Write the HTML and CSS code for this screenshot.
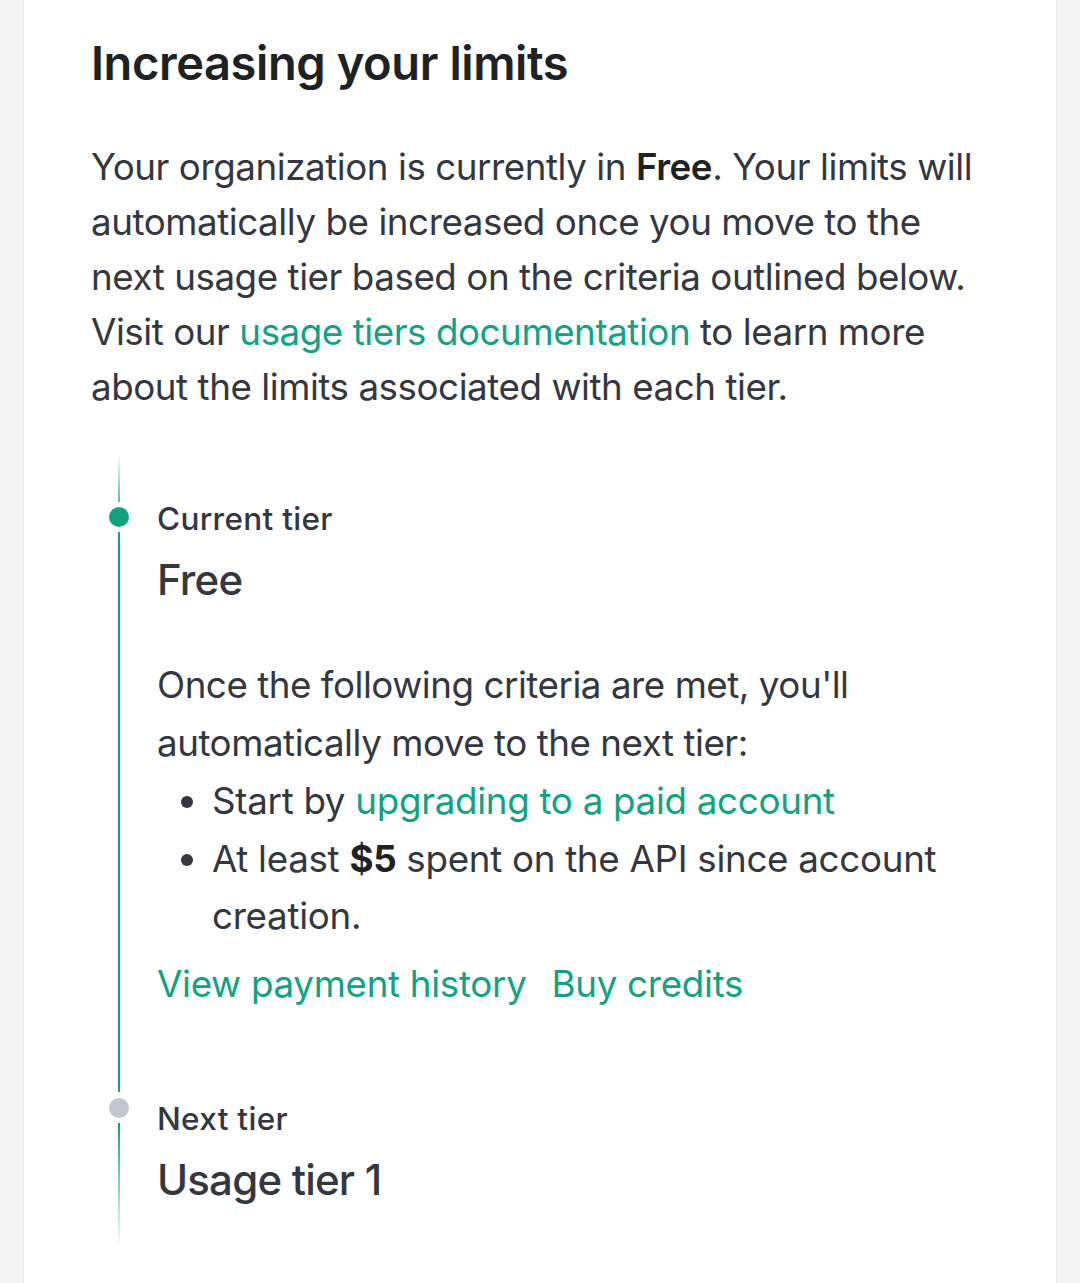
FILE: index.html
```html
<!DOCTYPE html>
<html lang="en">
<head>
<meta charset="utf-8">
<title>Increasing your limits</title>
<link rel="stylesheet" href="styles.css">
</head>
<body>
<main class="card">
  <h1 class="title">Increasing your limits</h1>
  <p class="intro">Your organization is currently in <strong>Free</strong>. Your limits will automatically be increased once you move to the next usage tier based on the criteria outlined below. Visit our <a class="link" href="#">usage tiers documentation</a> to learn more about the limits associated with each tier.</p>

  <section class="timeline">
    <div class="tl-item">
      <div class="rail">
        <span class="seg seg-fade-in"></span>
        <span class="dot dot-active"></span>
        <span class="seg seg-fill"></span>
      </div>
      <div class="tl-body tl-body-first">
        <div class="tier-label">Current tier</div>
        <div class="tier-name">Free</div>
        <p class="criteria">Once the following criteria are met, you'll automatically move to the next tier:</p>
        <ul class="crit-list">
          <li>Start by <a class="link" href="#">upgrading to a paid account</a></li>
          <li>At least <strong>$5</strong> spent on the API since account creation.</li>
        </ul>
        <div class="actions">
          <a class="link" href="#">View payment history</a>
          <a class="link" href="#">Buy credits</a>
        </div>
      </div>
    </div>
    <div class="tl-item">
      <div class="rail">
        <span class="dot dot-next"></span>
        <span class="seg seg-fade-out"></span>
      </div>
      <div class="tl-body tl-body-last">
        <div class="tier-label">Next tier</div>
        <div class="tier-name">Usage tier 1</div>
      </div>
    </div>
  </section>
</main>
</body>
</html>
```

FILE: styles.css
```css
html, body {
  margin: 0;
  padding: 0;
}
body {
  background: #f4f4f4;
  font-family: Inter, "Noto Sans", "Liberation Sans", sans-serif;
  color: #353740;
}
.card {
  box-sizing: border-box;
  margin-left: 22px;
  width: 1036px;
  min-height: 1283px;
  background: #ffffff;
  border-left: 2px solid #ececf1;
  border-right: 2px solid #ececf1;
  padding: 32px 60px 0 67px;
}
.title {
  margin: 0;
  font-size: 47px;
  line-height: 61px;
  font-weight: 600;
  color: #202123;
  letter-spacing: -0.4px;
}
.intro {
  margin: 46px 0 0;
  font-size: 36.75px;
  line-height: 55.1px;
  font-weight: 400;
  letter-spacing: -0.45px;
}
.intro strong {
  font-weight: 600;
  color: #202123;
}
.link {
  color: #10a37f;
  text-decoration: none;
}
.timeline {
  margin-top: 40px;
  display: flex;
  flex-direction: column;
}
.tl-item {
  display: flex;
  gap: 10px;
}
.rail {
  width: 56px;
  flex: none;
  display: flex;
  flex-direction: column;
  align-items: center;
}
.seg {
  width: 2px;
  display: block;
}
.seg-fade-in {
  height: 48px;
  margin-bottom: 5px;
  background: linear-gradient(to bottom, rgba(16, 163, 127, 0), rgba(16, 163, 127, 0.7));
}
.seg-fill {
  flex: 1;
  margin-top: 5px;
  margin-bottom: 6px;
  background: #10a37f;
}
.seg-fade-out {
  height: 125px;
  margin-top: 5px;
  background: linear-gradient(to bottom, #10a37f, rgba(16, 163, 127, 0));
}
.dot {
  width: 20px;
  height: 20px;
  border-radius: 50%;
  display: block;
  flex: none;
}
.dot-active {
  background: #10a37f;
}
.dot-next {
  background: #c5c5d2;
}
.tl-body {
  flex: 1;
}
.tl-body-first {
  padding-top: 44px;
  padding-bottom: 85px;
}
.tl-body-last {
  padding-top: 0;
}
.tier-label {
  font-size: 31.5px;
  line-height: 42px;
  font-weight: 500;
  color: #353740;
  letter-spacing: 0.3px;
}
.tier-name {
  margin-top: 12px;
  font-size: 42px;
  line-height: 56px;
  font-weight: 500;
  color: #353740;
  letter-spacing: -0.8px;
}
.criteria {
  margin: 48px 0 0;
  font-size: 36.75px;
  line-height: 57.75px;
  letter-spacing: -0.47px;
}
.crit-list {
  margin: 0;
  padding-left: 55px;
  font-size: 36.75px;
  line-height: 57.75px;
  letter-spacing: -0.3px;
}
.crit-list strong {
  font-weight: 700;
  color: #202123;
}
.actions {
  margin-top: 10px;
  display: flex;
  gap: 25px;
  font-size: 36.75px;
  line-height: 57.75px;
  letter-spacing: -0.3px;
}
```
